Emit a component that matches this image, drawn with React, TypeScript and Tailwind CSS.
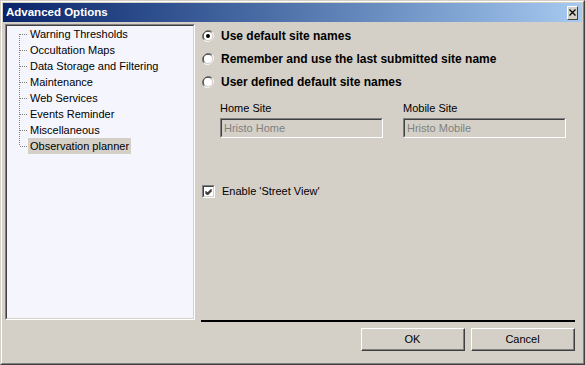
const treeItems = [
  'Warning Thresholds',
  'Occultation Maps',
  'Data Storage and Filtering',
  'Maintenance',
  'Web Services',
  'Events Reminder',
  'Miscellaneous',
  'Observation planner',
]

function Connector({ first, last }: { first: boolean; last: boolean }) {
  return (
    <svg width="21" height="16" className="shrink-0">
      <line x1="12.5" y1={first ? 8 : 0} x2="12.5" y2={last ? 8 : 16}
        stroke="#808080" strokeDasharray="1 1" />
      <line x1="13" y1="8.5" x2="21" y2="8.5" stroke="#808080" strokeDasharray="1 1" />
    </svg>
  )
}

function Radio({ checked }: { checked?: boolean }) {
  return (
    <svg width="12" height="12" className="shrink-0">
      <path d="M10.2 1.8 A6 6 0 0 0 1.8 10.2" fill="none" stroke="#808080" strokeWidth="1" />
      <path d="M9.4 2.6 A4.8 4.8 0 0 0 2.6 9.4" fill="none" stroke="#404040" strokeWidth="1" />
      <path d="M1.8 10.2 A6 6 0 0 0 10.2 1.8" fill="none" stroke="#ffffff" strokeWidth="1" />
      <path d="M2.6 9.4 A4.8 4.8 0 0 0 9.4 2.6" fill="none" stroke="#d4d0c8" strokeWidth="1" />
      <circle cx="6" cy="6" r="4" fill="#fff" />
      {checked && <circle cx="6" cy="6" r="2" fill="#000" />}
    </svg>
  )
}

function RadioRow({ label, checked }: { label: string; checked?: boolean }) {
  return (
    <div className="flex items-center h-[23px] gap-[7px]">
      <Radio checked={checked} />
      <span className="font-bold text-[12px] text-black">{label}</span>
    </div>
  )
}

function Field({ label, value }: { label: string; value: string }) {
  return (
    <div className="w-[163px] flex flex-col">
      <span className="h-[14px] leading-[14px] text-[11px] text-black">{label}</span>
      <div className="mt-[3px] h-[20px] border-t border-l border-t-[#808080] border-l-[#808080] border-r border-b border-r-white border-b-white">
        <div className="h-full border-t border-l border-t-[#404040] border-l-[#404040] border-r border-b border-r-[#d4d0c8] border-b-[#d4d0c8] bg-[#d4d0c8] pl-[2px] text-[11px] leading-[16px] text-[#808080]">
          {value}
        </div>
      </div>
    </div>
  )
}

function Button({ label }: { label: string }) {
  return (
    <div className="w-[104px] h-[23px] border-t border-l border-t-white border-l-white border-r border-b border-r-[#404040] border-b-[#404040]">
      <div className="h-full flex items-center justify-center border-r border-b border-r-[#808080] border-b-[#808080] text-[11px] text-black">
        {label}
      </div>
    </div>
  )
}

export default function App() {
  return (
    <div className="w-[585px] h-[365px] bg-[#d4d0c8] border border-t-[#d4d0c8] border-l-[#d4d0c8] border-r-[#404040] border-b-[#404040]"
      style={{ fontFamily: '"Liberation Sans", Arial, sans-serif' }}>
      <div className="h-full border border-t-white border-l-white border-r-[#808080] border-b-[#808080] p-[1px] flex flex-col">
        {/* title bar */}
        <div className="h-[19px] flex items-center justify-between bg-gradient-to-r from-[#0a246a] to-[#a6caf0]">
          <span className="pl-[3px] text-white font-bold text-[11.5px]">Advanced Options</span>
          <div className="mr-[4px] w-[11px] h-[14px] bg-[#d4d0c8] border-t border-l border-t-white border-l-white border-r border-b border-r-[#404040] border-b-[#404040] flex items-center justify-center">
            <svg width="7" height="7">
              <path d="M0.5 0.5 L6.5 6.5 M6.5 0.5 L0.5 6.5" stroke="#000" strokeWidth="1.2" />
            </svg>
          </div>
        </div>

        <div className="flex-1 flex flex-col pl-[2px] pt-[2px]">
          <div className="flex h-[296px]">
            {/* tree */}
            <div className="w-[190px] h-full border-t border-l border-t-[#808080] border-l-[#808080] border-r border-b border-r-white border-b-white">
              <div className="h-full border-t border-l border-t-[#404040] border-l-[#404040] border-r border-b border-r-[#d4d0c8] border-b-[#d4d0c8] bg-[#f5f5fe] flex flex-col">
                {treeItems.map((item, i) => (
                  <div key={item} className="flex items-center h-[16px]">
                    <Connector first={i === 0} last={i === treeItems.length - 1} />
                    <span className={`px-[2px] h-[16px] leading-[16px] text-[11px] text-black ${i === treeItems.length - 1 ? 'bg-[#d4d0c8]' : ''}`}>
                      {item}
                    </span>
                  </div>
                ))}
              </div>
            </div>

            {/* options */}
            <div className="flex-1 pl-[7px] flex flex-col">
              <RadioRow label="Use default site names" checked />
              <RadioRow label="Remember and use the last submitted site name" />
              <RadioRow label="User defined default site names" />
              <div className="flex gap-[20px] ml-[18px] mt-[8px]">
                <Field label="Home Site" value="Hristo Home" />
                <Field label="Mobile Site" value="Hristo Mobile" />
              </div>
              <div className="flex items-center gap-[7px] mt-[45px]">
                <div className="w-[13px] h-[13px] border-t border-l border-t-[#808080] border-l-[#808080] border-r border-b border-r-white border-b-white">
                  <div className="h-full border-t border-l border-t-[#404040] border-l-[#404040] border-r border-b border-r-[#d4d0c8] border-b-[#d4d0c8] bg-white flex items-center justify-center">
                    <svg width="7" height="7">
                      <path d="M0.5 3 L2.5 5 L6.5 1 M0.5 4 L2.5 6 L6.5 2 M0.5 5 L2.5 7 L6.5 3" stroke="#000" strokeWidth="1" fill="none" />
                    </svg>
                  </div>
                </div>
                <span className="text-[11px] text-black">Enable 'Street View'</span>
              </div>
            </div>
          </div>

          <div className="ml-[196px] w-[374px] h-[2px] bg-black" />
          <div className="flex justify-end gap-[6px] mt-[6px] mr-[7px]">
            <Button label="OK" />
            <Button label="Cancel" />
          </div>
        </div>
      </div>
    </div>
  )
}
